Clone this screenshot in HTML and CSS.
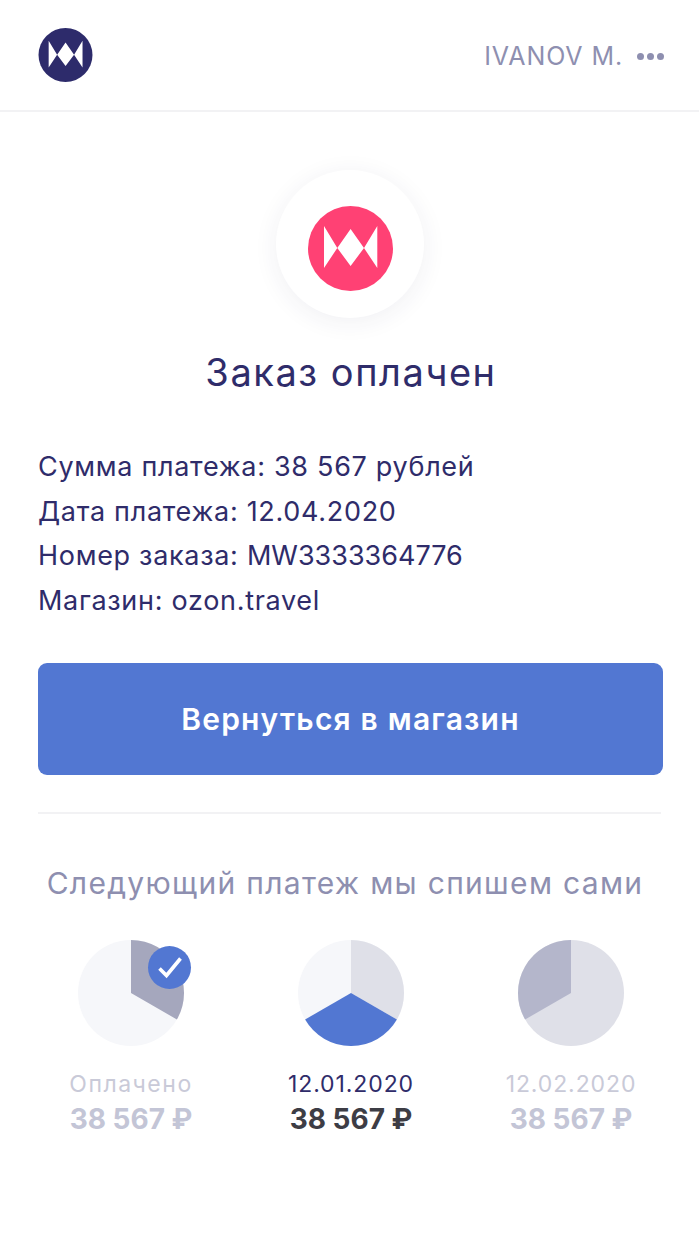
FILE: index.html
```html
<!DOCTYPE html>
<html lang="ru">
<head>
<meta charset="utf-8">
<title>Заказ оплачен</title>
<link rel="stylesheet" href="styles.css">
</head>
<body>
<header class="topbar">
  <svg class="logo-small" viewBox="0 0 85 85"><circle cx="42.5" cy="42.5" r="42.5" fill="#2d2b6b"/><path fill="#fff" d="M16 20 29.3 42 16 62ZM42.6 23 56 42 42.6 60 29.3 42ZM69.3 20 56 42 69.3 62Z"/></svg>
  <div class="user"><span class="user-name">IVANOV M.</span><span class="dots"><i></i><i></i><i></i></span></div>
</header>
<main>
  <div class="badge">
    <svg class="logo-big" viewBox="0 0 85 85"><circle cx="42.5" cy="42.5" r="42.5" fill="#ff4174"/><path fill="#fff" d="M16 20 29.3 42 16 62ZM42.6 23 56 42 42.6 60 29.3 42ZM69.3 20 56 42 69.3 62Z"/></svg>
  </div>
  <h1 class="title">Заказ оплачен</h1>
  <ul class="details">
    <li>Сумма платежа: 38 567 рублей</li>
    <li>Дата платежа: 12.04.2020</li>
    <li>Номер заказа: <span class="order-no">MW3333364776</span></li>
    <li>Магазин: ozon.travel</li>
  </ul>
  <div class="action"><a class="btn" href="#">Вернуться в магазин</a></div>
  <hr class="divider">
  <h2 class="subtitle">Следующий платеж мы спишем сами</h2>
  <section class="schedule">
    <div class="pay">
      <div class="pie-wrap">
        <svg class="pie" viewBox="0 0 106 106"><circle cx="53" cy="53" r="53" fill="#f6f7fa"/><path fill="#a5a7bd" d="M53 0A53 53 0 0 1 98.9 79.5L53 53Z"/></svg>
        <span class="check"><svg viewBox="0 0 43 43"><path d="M11.5 22.5 18.5 29.5 32.5 12.5" fill="none" stroke="#fff" stroke-width="3.6"/></svg></span>
      </div>
      <div class="pay-label muted paid">Оплачено</div>
      <div class="pay-sum muted-sum">38 567 ₽</div>
    </div>
    <div class="pay">
      <div class="pie-wrap">
        <svg class="pie" viewBox="0 0 106 106"><circle cx="53" cy="53" r="53" fill="#f6f7fa"/><path fill="#dfe0e8" d="M53 0A53 53 0 0 1 98.9 79.5L53 53Z"/><path fill="#5277d2" d="M98.9 79.5A53 53 0 0 1 7.1 79.5L53 53Z"/></svg>
      </div>
      <div class="pay-label current">12.01.2020</div>
      <div class="pay-sum">38 567 ₽</div>
    </div>
    <div class="pay">
      <div class="pie-wrap">
        <svg class="pie" viewBox="0 0 106 106"><circle cx="53" cy="53" r="53" fill="#dfe0e8"/><path fill="#b4b6cb" d="M53 0A53 53 0 0 0 7.1 79.5L53 53Z"/></svg>
      </div>
      <div class="pay-label muted">12.02.2020</div>
      <div class="pay-sum muted-sum">38 567 ₽</div>
    </div>
  </section>
</main>
</body>
</html>
```
FILE: styles.css
```css
* { box-sizing: border-box; }
html, body { margin: 0; padding: 0; background: #fff; }
body { font-family: "Inter", "Noto Sans", sans-serif; color: #2f2c6a; min-height: 1248px; overflow-x: hidden; }

.topbar { height: 112px; display: flex; justify-content: space-between; align-items: flex-start; padding: 28px 35px 0 38px; border-bottom: 2px solid #f2f2f4; }
.logo-small { width: 55px; height: 54px; display: block; }
.user { display: flex; align-items: center; gap: 14px; height: 56px; color: #8e8fb0; }
.user-name { font-size: 25px; letter-spacing: 0.9px; font-weight: 400; }
.dots { display: flex; gap: 3px; }
.dots i { width: 7px; height: 7px; border-radius: 50%; background: #8e8fb0; display: block; }

.badge { width: 148px; height: 148px; border-radius: 50%; margin: 58px auto 0; display: flex; align-items: center; justify-content: center; background: #fff; box-shadow: 0 4px 24px rgba(40, 40, 80, 0.07); }
.logo-big { width: 85px; height: 85px; display: block; margin: 8px 0 0 2px; }

.title { margin: 31px 0 0; padding-left: 3px; text-align: center; font-size: 38px; line-height: 46px; font-weight: 400; letter-spacing: 1.55px; }

.details { list-style: none; margin: 50px 0 0; padding: 0 38px; font-size: 27px; line-height: 44.5px; letter-spacing: 0.7px; }
.order-no { letter-spacing: 0; }

.action { padding: 0 36px 0 38px; margin-top: 40px; }
.btn { display: flex; align-items: center; justify-content: center; height: 112px; border-radius: 9px; background: #5277d2; color: #fff; font-size: 30px; font-weight: 600; letter-spacing: 1.2px; text-decoration: none; }

.divider { border: 0; border-top: 2px solid #f2f2f4; margin: 37px 38px 0; }

.subtitle { margin: 49px 0 0; padding-right: 9px; text-align: center; font-size: 30px; line-height: 40px; font-weight: 400; color: #8e8fb0; letter-spacing: 1.3px; }

.schedule { display: flex; justify-content: center; margin-top: 37px; margin-left: -17px; margin-right: -20px; }
.pay { width: 220px; display: flex; flex-direction: column; align-items: center; }
.pie-wrap { position: relative; width: 106px; height: 106px; }
.pie { width: 106px; height: 106px; display: block; }
.check { position: absolute; left: 70px; top: 6px; width: 43px; height: 43px; border-radius: 50%; background: #5277d2; display: block; }
.check svg { width: 43px; height: 43px; display: block; }
.pay-label { margin-top: 22px; font-size: 23px; line-height: 32px; letter-spacing: 0.9px; }
.paid { letter-spacing: 1.5px; }
.pay-sum { font-size: 28px; line-height: 39px; font-weight: 700; color: #3d3d45; }
.current { color: #2f2c6a; }
.muted { color: #c9cad8; }
.muted-sum { color: #c3c5d6; }
```
